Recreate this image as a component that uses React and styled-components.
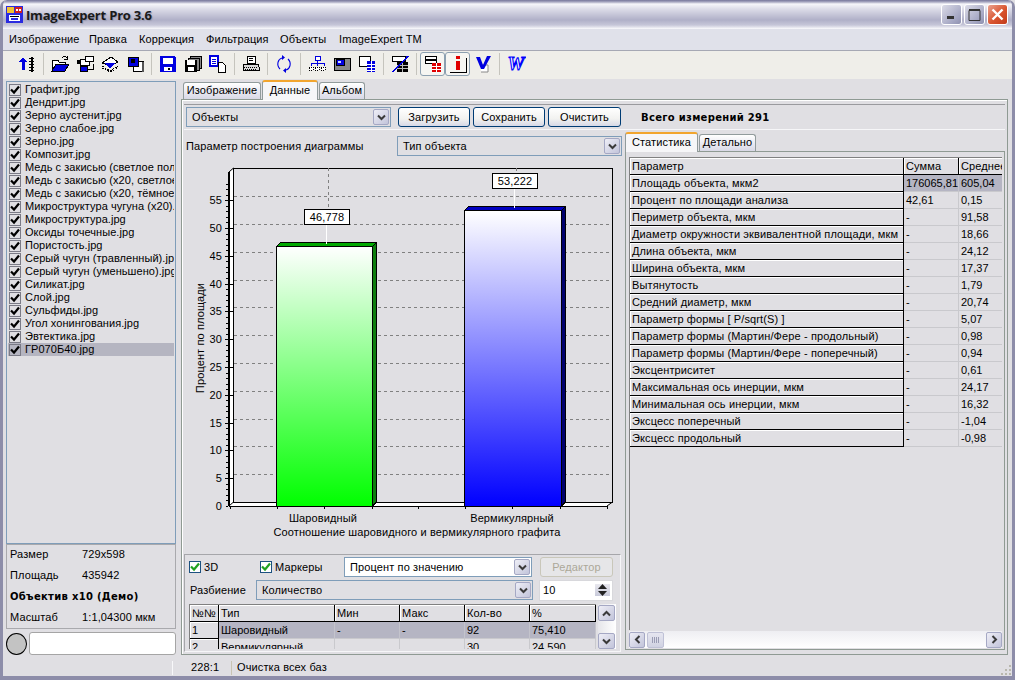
import styled, { createGlobalStyle } from 'styled-components';

const FONT = '"Liberation Sans", "DejaVu Sans", sans-serif';
const BOLD_FONT = '"DejaVu Sans", "Liberation Sans", sans-serif';

const GlobalStyle = createGlobalStyle`
  html, body {
    margin: 0;
    padding: 0;
    background: #e0dfe3;
  }
  * {
    box-sizing: border-box;
  }
`;

const Window = styled.div`
  width: 1015px;
  height: 680px;
  display: flex;
  flex-direction: column;
  overflow: hidden;
  position: relative;
  font: 11px/13px ${FONT};
  letter-spacing: 0.12px;
  color: #000;
  background: #e0dfe3;
  border-left: 3px solid #8d8da9;
  border-right: 3px solid #8d8da9;
  border-bottom: 4px solid #8d8da9;
  border-radius: 7px 7px 0 0;
`;

const TitleBar = styled.div`
  height: 29px;
  flex: none;
  margin: 0 -3px;
  padding: 0 7px 0 6px;
  display: flex;
  align-items: center;
  background: linear-gradient(#76769a 0, #a9a9c2 2px, #f6f6fa 4px, #dcdce8 9px, #b0b0c8 20px, #c6c6d8 25px, #fbfbfd 29px);
  border-radius: 7px 7px 0 0;
`;

const TitleText = styled.div`
  font: bold 13px "Open Sans", "DejaVu Sans", sans-serif;
  letter-spacing: -0.2px;
  margin-left: 3px;
  color: #1a1a1a;
  text-shadow: 1px 1px 1px #9a9ab0;
  flex: 1;
`;

const CaptionButton = styled.div`
  width: 21px;
  height: 21px;
  margin-left: 2px;
  border: 1px solid #fff;
  border-radius: 3px;
  display: flex;
  align-items: center;
  justify-content: center;
  background: ${(p) => (p.$close
    ? 'linear-gradient(135deg, #e9a28f, #d9542f 55%, #c23a1a)'
    : 'linear-gradient(135deg, #dcdce8, #a6a8c4 70%, #8f91b0)')};
`;

const MenuBar = styled.div`
  height: 22px;
  flex: none;
  display: flex;
  align-items: center;
  padding-left: 6px;
  background: #e0e1ea;
  border-bottom: 1px solid #a6a8b4;
`;

const MenuItem = styled.span`
  width: ${(p) => p.$w}px;
  flex: none;
`;

const ToolBar = styled.div`
  height: 28px;
  flex: none;
  display: flex;
  align-items: center;
  padding: 0 0 2px 11px;
  background: #efeee9;
`;

const ToolButton = styled.div`
  width: 25px;
  height: 24px;
  display: flex;
  align-items: center;
  justify-content: center;
  border-radius: 3px;
  ${(p) => p.$pressed && 'border: 1px solid #8ca0b0; background: #f6f6f2;'}
`;

const ToolSep = styled.div`
  width: 8px;
  height: 22px;
  position: relative;
  &::after {
    content: '';
    position: absolute;
    left: 4px;
    top: 0;
    bottom: 0;
    width: 1px;
    background: #c5c4bd;
  }
`;

const Workspace = styled.div`
  flex: 1;
  min-height: 0;
  display: flex;
  padding: 1px 4px 1px 3px;
  gap: 5px;
`;

const Sidebar = styled.div`
  width: 170px;
  flex: none;
  display: flex;
  flex-direction: column;
  padding-top: 1px;
`;

const FileList = styled.div`
  height: 463px;
  flex: none;
  padding: 1px;
  border: 1px solid #7f9db9;
  overflow: hidden;
`;

const FileRow = styled.div`
  height: 13px;
  display: flex;
  align-items: center;
  gap: 4px;
  padding-left: 1px;
  white-space: nowrap;
  overflow: hidden;
  letter-spacing: 0.05px;
  background: ${(p) => (p.$selected ? '#b5b5c1' : 'transparent')};
`;

const TickBox = styled.span`
  width: 12px;
  height: 12px;
  flex: none;
  display: inline-flex;
  align-items: center;
  justify-content: center;
  background: ${(p) => (p.$framed ? '#fff' : 'transparent')};
  border: 1px solid ${(p) => (p.$framed ? '#1c5180' : '#7a7a86')};
`;

const InfoPanel = styled.div`
  height: 85px;
  flex: none;
  padding: 0 3px;
  border: 1px solid #a9a9ad;
  display: flex;
  flex-direction: column;
  overflow: hidden;
`;

const InfoRow = styled.div`
  height: 21px;
  flex: none;
  padding-bottom: 2px;
  display: flex;
  align-items: center;
  ${(p) => p.$bold && `font: bold 10px ${BOLD_FONT}; letter-spacing: 0.3px;`}
`;

const InfoLabel = styled.span`
  width: 72px;
`;

const BottomRow = styled.div`
  display: flex;
  gap: 2px;
  margin-top: 3px;
  height: 23px;
`;

const Lamp = styled.div`
  width: 21px;
  height: 22px;
  margin-top: 1px;
  border-radius: 50%;
  border: 1px solid #000;
  background: #c3c3c3;
`;

const InputBox = styled.div`
  flex: 1;
  background: #fff;
  border: 1px solid #a5a5a5;
  border-radius: 3px;
`;

const TabStrip = styled.div`
  height: ${(p) => p.$h}px;
  flex: none;
  display: flex;
  align-items: flex-end;
  padding-left: ${(p) => p.$pad}px;
  gap: 1px;
`;

const Tab = styled.div`
  width: ${(p) => p.$w}px;
  height: ${(p) => (p.$active ? 20 : 17)}px;
  padding-bottom: ${(p) => (p.$active ? 2 : 1)}px;
  display: flex;
  align-items: center;
  justify-content: center;
  border: 1px solid #919b9c;
  border-bottom: none;
  border-radius: 3px 3px 0 0;
  position: relative;
  z-index: ${(p) => (p.$active ? 2 : 0)};
  margin-bottom: ${(p) => (p.$active ? -1 : 0)}px;
  background: ${(p) => (p.$active ? '#f6f6f8' : 'linear-gradient(#fff, #d8d8e6)')};
  ${(p) => p.$active && 'border-top: 2px solid #f2a52e;'}
`;

const MainColumn = styled.div`
  flex: 1;
  min-width: 0;
  display: flex;
  flex-direction: column;
`;

const Page = styled.div`
  flex: 1;
  min-height: 0;
  border: 1px solid #8f9a93;
  box-shadow: inset 1px 1px 0 #fff;
  padding: 4px 2px 4px 2px;
  display: flex;
  flex-direction: column;
`;

const ActionBar = styled.div`
  height: 26px;
  flex: none;
  display: flex;
  align-items: center;
  padding-left: 2px;
  border-top: 1px solid #9a9a9e;
  border-bottom: 1px solid #f6f6f8;
`;

const ComboBox = styled.div`
  width: ${(p) => p.$w}px;
  height: ${(p) => p.$h || 20}px;
  flex: none;
  display: flex;
  align-items: center;
  padding: 0 1px 0 5px;
  border: 1px solid #7f9db9;
  background: ${(p) => (p.$white ? '#fff' : 'transparent')};
`;

const ComboText = styled.span`
  flex: 1;
`;

const ArrowButton = styled.div`
  width: ${(p) => p.$w || 16}px;
  height: ${(p) => p.$h || 16}px;
  flex: none;
  display: flex;
  align-items: center;
  justify-content: center;
  border: 1px solid #a5a8c4;
  border-radius: 2px;
  background: linear-gradient(135deg, #eeeef6, #c2c4da);
`;

const PushButton = styled.div`
  width: ${(p) => p.$w}px;
  height: 20px;
  flex: none;
  margin-left: ${(p) => p.$ml || 3}px;
  display: flex;
  align-items: center;
  justify-content: center;
  border-radius: 3px;
  border: 1px solid ${(p) => (p.$disabled ? '#c9c7ba' : '#003c74')};
  color: ${(p) => (p.$disabled ? '#aca899' : '#000')};
  background: ${(p) => (p.$disabled ? '#e6e6e8' : 'linear-gradient(#fff, #f2f2f0 60%, #d6d8e6)')};
`;

const TotalText = styled.div`
  margin-left: 20px;
  font: bold 10px ${BOLD_FONT};
  letter-spacing: 0.3px;
`;

const Split = styled.div`
  flex: 1;
  min-height: 0;
  display: flex;
  gap: 3px;
`;

const ChartPane = styled.div`
  width: 438px;
  flex: none;
  display: flex;
  flex-direction: column;
`;

const ParamRow = styled.div`
  height: 20px;
  margin-top: 6px;
  flex: none;
  display: flex;
  align-items: center;
  padding-left: 2px;
`;

const ParamLabel = styled.span`
  width: 211px;
`;

const ChartBox = styled.svg`
  display: block;
  width: 438px;
  height: 385px;
  margin-top: 4px;
  flex: none;
  font-family: ${FONT};
  font-size: 11px;
`;

const ControlsPanel = styled.div`
  margin-top: 9px;
  height: 98px;
  flex: none;
  width: 437px;
  border: 1px solid #a6a6aa;
  border-right-color: #f6f6f8;
  border-bottom-color: #f6f6f8;
  padding: 1px 0 0 4px;
  display: flex;
  flex-direction: column;
`;

const ControlRow = styled.div`
  height: ${(p) => p.$h}px;
  flex: none;
  display: flex;
  align-items: center;
`;

const CheckLabel = styled.label`
  width: ${(p) => p.$w}px;
  flex: none;
  display: flex;
  align-items: center;
  gap: 3px;
`;

const RowLabel = styled.span`
  width: 67px;
  flex: none;
  padding-left: 1px;
`;

const Spinner = styled.div`
  width: 74px;
  height: 21px;
  margin-left: 6px;
  flex: none;
  display: flex;
  align-items: center;
  justify-content: space-between;
  padding: 0 2px 0 3px;
  background: #fff;
  border: 1px solid #d8d8dc;
`;

const SpinStack = styled.div`
  width: 15px;
  display: flex;
  flex-direction: column;
  align-items: center;
  gap: 2px;
  background: linear-gradient(#e8e8ee, #c8cada);
`;

const GridRow = styled.div`
  display: flex;
  gap: 2px;
  margin-top: 2px;
  height: 45px;
`;

const MiniGrid = styled.div`
  width: 407px;
  overflow: hidden;
  border-top: 1px solid #808080;
  border-left: 1px solid #808080;
  display: grid;
  grid-template-columns: 29px 116px 65px 65px 65px 66px;
  grid-auto-rows: 17px;
`;

const Fixed = styled.div`
  padding-left: 2px;
  display: flex;
  align-items: center;
  white-space: nowrap;
  overflow: hidden;
  background: #e0dfe3;
  border-right: 1px solid #000;
  border-bottom: 1px solid #000;
  box-shadow: inset 1px 1px 0 #fff;
`;

const Cell = styled.div`
  padding-left: 2px;
  display: flex;
  align-items: center;
  white-space: nowrap;
  overflow: hidden;
  letter-spacing: 0;
  border-right: 1px solid ${(p) => (p.$selected ? '#c4c4cc' : '#c9c9cd')};
  border-bottom: 1px solid #c9c9cd;
  background: ${(p) => (p.$selected ? '#b5b5c3' : 'transparent')};
`;

const VScroll = styled.div`
  width: 18px;
  display: flex;
  flex-direction: column;
  justify-content: space-between;
  padding-top: 1px;
  background: linear-gradient(90deg, #e6e6ea, #fff);
`;

const StatsPane = styled.div`
  flex: 1;
  min-width: 0;
  display: flex;
  flex-direction: column;
`;

const StatsBody = styled.div`
  flex: 1;
  min-height: 0;
  border: 1px solid #8f9a93;
  padding: 5px 2px 1px 3px;
  display: flex;
  flex-direction: column;
`;

const StatsGrid = styled.div`
  flex: 1;
  min-height: 0;
  align-content: start;
  overflow: hidden;
  border-top: 1px solid #808080;
  border-left: 1px solid #808080;
  display: grid;
  grid-template-columns: 274px 55px 60px;
  grid-auto-rows: 17px;
`;

const HScroll = styled.div`
  height: 17px;
  flex: none;
  margin-top: 1px;
  display: flex;
  align-items: center;
  background: linear-gradient(#eeeef2, #fff);
`;

const HThumb = styled.div`
  width: 17px;
  height: 16px;
  margin-left: 2px;
  display: flex;
  align-items: center;
  justify-content: center;
  gap: 1px;
  border: 1px solid #bfc1d6;
  border-radius: 2px;
  background: linear-gradient(#e6e6f0, #d0d2e2);
`;

const GripLine = styled.i`
  width: 1px;
  height: 6px;
  background: #9a9cb4;
`;

const HSpacer = styled.div`
  flex: 1;
`;

const StatusBar = styled.div`
  height: 20px;
  flex: none;
  padding-top: 3px;
  display: flex;
  align-items: center;
  position: relative;
`;

const StatusCell = styled.div`
  width: ${(p) => p.$w}px;
  height: 14px;
  flex: none;
  display: flex;
  align-items: center;
  padding-left: ${(p) => p.$pad || 0}px;
  border-right: 1px solid ${(p) => p.$line || 'transparent'};
`;

const Grip = styled.svg`
  position: absolute;
  right: 0;
  bottom: 0;
`;

const Chevron = ({ dir = 'down', size = 9 }) => {
  const rot = { down: 0, up: 180, left: 90, right: -90 }[dir];
  return (
    <svg width={size} height={size} viewBox="0 0 9 9" style={{ transform: `rotate(${rot}deg)` }}>
      <path d="M1 2.5 L4.5 6 L8 2.5" fill="none" stroke="#3a3a3a" strokeWidth="2" />
    </svg>
  );
};

const Tick = ({ green }) => (
  <svg width="10" height="10" viewBox="0 0 10 10">
    <path d="M1 4.5 L4 7.5 L9 1.5" fill="none" stroke={green ? '#21a121' : '#000'} strokeWidth="2.2" />
  </svg>
);

const Ico = ({ children, w = 18, h = 18 }) => (
  <svg width={w} height={h} viewBox="0 0 18 18" shapeRendering="crispEdges">{children}</svg>
);

const B = '#0000e0';

const icons = {
  sort: (
    <Ico>
      <path d="M5 15V6" fill="none" stroke={B} strokeWidth="3" />
      <path d="M1 7l4-5 4 5z" fill={B} />
      <path d="M11 3h5M11 6h5M11 9h5M11 12h5M11 15h5" stroke="#000" fill="none" />
      <path d="M13 2h2v15h-2z" fill="#000" />
    </Ico>
  ),
  open: (
    <Ico>
      <path d="M1 5h6l1 2h6v2H5L1 16z" fill="#fff" stroke="#000" />
      <path d="M5 9h13l-4 7H1z" fill={B} stroke="#000" />
      <path d="M11 3c2-2 4-2 5 0M16 1v3h-3" fill="none" stroke="#000" />
    </Ico>
  ),
  camera: (
    <Ico>
      <rect x="1" y="5" width="3" height="4" fill="#000" />
      <rect x="4" y="4" width="9" height="6" fill="#fff" stroke="#000" />
      <rect x="9" y="1" width="8" height="5" fill="#fff" stroke="#000" />
      <rect x="4" y="11" width="7" height="5" fill={B} stroke="#000" />
      <path d="M11 14h6V9" fill="none" stroke="#000" />
    </Ico>
  ),
  layers: (
    <Ico>
      <path d="M1 8L10 2l7 5-8 4z" fill="#fff" stroke="#000" />
      <path d="M4 8h10l-5 6z" fill={B} />
      <path d="M1 11l8 5 8-5M1 13l8 4 8-4" fill="none" stroke="#000" strokeDasharray="2 1" />
    </Ico>
  ),
  windows: (
    <Ico>
      <rect x="7" y="6" width="10" height="10" fill="#fff" stroke="#000" />
      <rect x="16" y="7" width="2" height="10" fill="#555" />
      <rect x="2" y="2" width="10" height="9" fill={B} stroke="#000" />
      <rect x="5" y="4" width="4" height="4" fill="#000" />
    </Ico>
  ),
  save: (
    <Ico>
      <path d="M1 1h14l2 2v14H1z" fill={B} />
      <rect x="4" y="3" width="10" height="6" fill="#fff" />
      <rect x="5" y="12" width="8" height="4" fill="#fff" />
      <rect x="9" y="13" width="2" height="2" fill="#000" />
    </Ico>
  ),
  saveAll: (
    <Ico>
      <rect x="6" y="1" width="11" height="12" fill="#888" stroke="#000" />
      <rect x="4" y="3" width="11" height="12" fill="#888" stroke="#000" />
      <rect x="1" y="5" width="12" height="12" fill="#000" />
      <rect x="3" y="5" width="8" height="5" fill="#fff" />
      <rect x="4" y="12" width="6" height="4" fill="#fff" />
    </Ico>
  ),
  docs: (
    <Ico>
      <rect x="1" y="1" width="8" height="10" fill="#fff" stroke={B} strokeWidth="1.5" />
      <path d="M3 4h4M3 6h4M3 8h4" stroke={B} />
      <path d="M10 7h3l3 3v7H9V7z" fill="#fff" stroke="#000" />
    </Ico>
  ),
  print: (
    <Ico>
      <rect x="5" y="1" width="8" height="7" fill="#fff" stroke="#000" />
      <path d="M7 3h4M7 5h4" stroke="#000" />
      <path d="M2 9h14l1 3v3H1v-3z" fill="#d8d8d8" stroke="#000" />
      <path d="M2 12h14M3 14h12" stroke="#000" strokeDasharray="1 1" />
    </Ico>
  ),
  cycle: (
    <svg width="18" height="20" viewBox="0 0 18 20">
      <path d="M5 15C1 11 3 5 7 4M13 5c4 4 2 10-2 11" fill="none" stroke={B} strokeWidth="1.1" />
      <path d="M7 1v5l3-2.5zM11 14v5l-3-2.5z" fill={B} />
    </svg>
  ),
  tree: (
    <Ico>
      <rect x="7" y="1" width="5" height="4" fill="#fff" stroke={B} />
      <path d="M9 5v3M3 8h13M3 8v3M9 8v3M16 8v3" stroke={B} fill="none" />
      <path d="M1 12h4v3H1zM7 12h4v3H7zM13 12h4v3h-4z" fill="#fff" stroke="#000" strokeDasharray="1 1" />
    </Ico>
  ),
  monitor: (
    <Ico>
      <rect x="1" y="3" width="16" height="12" fill="#888" stroke="#000" />
      <rect x="3" y="4" width="8" height="6" fill={B} stroke="#000" />
      <rect x="5" y="6" width="3" height="2" fill="#cfd6ff" />
    </Ico>
  ),
  tableWin: (
    <Ico>
      <rect x="1" y="1" width="11" height="10" fill="#fff" stroke="#000" />
      <rect x="9" y="6" width="8" height="11" fill={B} />
      <path d="M9 9h8M9 12h8M9 15h8M13 6v11" stroke="#fff" />
    </Ico>
  ),
  tableCut: (
    <Ico>
      <rect x="1" y="1" width="13" height="5" fill="#fff" stroke="#000" />
      <rect x="6" y="7" width="11" height="10" fill="#000" />
      <path d="M6 10h11M6 13h11M11 7v10" stroke="#bbb" />
      <path d="M17 1L2 17" stroke={B} strokeWidth="1.5" fill="none" />
    </Ico>
  ),
  redTable: (
    <Ico>
      <rect x="1" y="1" width="11" height="3" fill="#fff" stroke="#000" />
      <rect x="1" y="5" width="11" height="3" fill="#fff" stroke="#000" />
      <rect x="8" y="8" width="9" height="9" fill="#e00000" />
      <path d="M8 11h9M8 14h9M12 8v9" stroke="#fff" />
    </Ico>
  ),
  info: (
    <Ico>
      <rect x="7" y="1" width="4" height="3" fill="#e00000" />
      <rect x="7" y="6" width="4" height="9" fill="#e00000" />
      <path d="M1 17h16V3" fill="none" stroke="#000" />
    </Ico>
  ),
  check: (
    <svg width="18" height="18" viewBox="0 0 18 18">
      <path d="M7 10h7v7H7" fill="#fff" stroke="#888" />
      <path d="M2 2h4l3 8 4-9h4l-7 13h-3z" fill={B} />
    </svg>
  ),
  word: (
    <svg width="20" height="18" viewBox="0 0 20 18">
      <text
        x="10"
        y="15"
        textAnchor="middle"
        fontFamily='"Liberation Serif", serif'
        fontWeight="bold"
        fontStyle="italic"
        fontSize="19"
        fill="#fff"
        stroke="#0000ff"
        strokeWidth="1.1"
      >
        W
      </text>
    </svg>
  ),
};

const toolbar = [
  'sort', '|', 'open', 'camera', 'layers', 'windows', '|', 'save', 'saveAll', 'docs', '|', 'print', '|',
  'cycle', '|', 'tree', 'monitor', 'tableWin', '|', 'tableCut', '|', 'redTable', 'info', 'check', '|', 'word',
];

const menu = [
  ['Изображение', 80], ['Правка', 50], ['Коррекция', 67], ['Фильтрация', 74], ['Объекты', 59], ['ImageExpert TM', 90],
];

const files = [
  'Графит.jpg', 'Дендрит.jpg', 'Зерно аустенит.jpg', 'Зерно слабое.jpg', 'Зерно.jpg', 'Композит.jpg',
  'Медь с закисью (светлое пол', 'Медь с закисью (х20, светлое', 'Медь с закисью (х20, тёмное',
  'Микроструктура чугуна (х20).j', 'Микроструктура.jpg', 'Оксиды точечные.jpg', 'Пористость.jpg',
  'Серый чугун (травленный).jpg', 'Серый чугун (уменьшено).jpg', 'Силикат.jpg', 'Слой.jpg', 'Сульфиды.jpg',
  'Угол хонингования.jpg', 'Эвтектика.jpg', 'ГР070Б40.jpg',
];

const stats = [
  ['Площадь объекта, мкм2', '176065,81', '605,04'],
  ['Процент по площади анализа', '42,61', '0,15'],
  ['Периметр объекта, мкм', '-', '91,58'],
  ['Диаметр окружности эквивалентной площади, мкм', '-', '18,66'],
  ['Длина объекта, мкм', '-', '24,12'],
  ['Ширина объекта, мкм', '-', '17,37'],
  ['Вытянутость', '-', '1,79'],
  ['Средний диаметр, мкм', '-', '20,74'],
  ['Параметр формы [ P/sqrt(S) ]', '-', '5,07'],
  ['Параметр формы (Мартин/Фере - продольный)', '-', '0,98'],
  ['Параметр формы (Мартин/Фере - поперечный)', '-', '0,94'],
  ['Эксцентриситет', '-', '0,61'],
  ['Максимальная ось инерции, мкм', '-', '24,17'],
  ['Минимальная ось инерции, мкм', '-', '16,32'],
  ['Эксцесс поперечный', '-', '-1,04'],
  ['Эксцесс продольный', '-', '-0,98'],
];

const PX = 5.56;
const grid = [5, 10, 15, 20, 25, 30, 35, 40, 45, 50, 55];
const minor = Array.from({ length: 59 }, (_, i) => i);
const xTicks = [230, 277, 324, 372, 418, 465, 512, 560, 607];

const Bar = ({ x, w, top, side, cap, id }) => (
  <g>
    <path d={`M${x} ${top}l4 -4h${w}l-4 4z`} fill={cap} stroke="#000" />
    <path d={`M${x + w} ${top}l4 -4V502l-4 4z`} fill={side} stroke="#000" />
    <rect x={x} y={top} width={w} height={506 - top} fill={`url(#${id})`} stroke="#000" />
  </g>
);

const Marker = ({ x, y, text, lineX, barTop }) => (
  <g>
    <path d={`M${lineX + 2} 168V${y}`} stroke="#808080" strokeDasharray="3 3" />
    <path d={`M${lineX} ${y + 15}V${barTop}`} stroke="#fff" />
    <rect x={x} y={y} width="45" height="15" fill="#fff" stroke="#000" />
    <text x={x + 22.5} y={y + 11} textAnchor="middle">{text}</text>
  </g>
);

const Chart = () => (
  <ChartBox viewBox="184 160 438 385">
    <defs>
      <linearGradient id="gb" x1="0" y1="0" x2="0" y2="1">
        <stop offset="0" stopColor="#fff" />
        <stop offset="1" stopColor="#00ff00" />
      </linearGradient>
      <linearGradient id="bb" x1="0" y1="0" x2="0" y2="1">
        <stop offset="0" stopColor="#fff" />
        <stop offset="1" stopColor="#0000ff" />
      </linearGradient>
    </defs>
    <g shapeRendering="crispEdges">
      <path d="M229 172V506H607L612.5 502H233V168z" fill="#fff" />
      <rect x="233.5" y="168.5" width="379" height="333.5" fill="none" stroke="#000" />
      <path d="M233.5 502.5H612.5" stroke="#000" strokeDasharray="3 2" />
      {grid.map((v) => (
        <path key={v} d={`M234 ${Math.round(502 - v * PX) + 0.5}H612`} stroke="#808080" strokeDasharray="3 3" />
      ))}
      {grid.map((v) => (
        <path key={v} d={`M225 ${Math.round(506 - v * PX) + 0.5}H233`} stroke="#000" />
      ))}
      {minor.map((v) => (
        <path key={v} d={`M226 ${Math.round(506 - v * PX) + 0.5}H228`} stroke="#000" />
      ))}
      <path d="M228.5 172V506" stroke="#000" strokeWidth="2" />
      <path d="M229 506.5H607" stroke="#000" />
      {xTicks.map((x) => (
        <path key={x} d={`M${x + 0.5} 506V509`} stroke="#000" />
      ))}
    </g>
    <path d="M229 172L233.5 168M229 506L233.5 502M607 506L612.5 502" stroke="#000" fill="none" />
    <g shapeRendering="crispEdges">
      <Bar x={276.5} w={96} top={246.5} side="#0d7f0d" cap="#00a800" id="gb" />
      <Bar x={464.5} w={97} top={210.5} side="#00006e" cap="#0000c0" id="bb" />
      <Marker x={304.5} y={209.5} text="46,778" lineX={326.5} barTop={244} />
      <Marker x={492.5} y={173.5} text="53,222" lineX={514.5} barTop={208} />
    </g>
    {[0, ...grid].map((v) => (
      <text key={v} x="222" y={Math.round(506 - v * PX) + 4} textAnchor="end">{v}</text>
    ))}
    <text transform="translate(204 338) rotate(-90)" textAnchor="middle">Процент по площади</text>
    <text x="323" y="522" textAnchor="middle">Шаровидный</text>
    <text x="512" y="522" textAnchor="middle">Вермикулярный</text>
    <text x="417" y="536" textAnchor="middle">Соотношение шаровидного и вермикулярного графита</text>
  </ChartBox>
);

const AppLogo = () => (
  <svg width="17" height="17" viewBox="0 0 17 17" shapeRendering="crispEdges">
    <rect x="0" y="0" width="17" height="17" fill="#2a2ae0" />
    <rect x="1" y="1" width="7" height="6" fill="#f2c230" />
    <rect x="9" y="1" width="7" height="6" fill="#d02020" />
    <rect x="10" y="3" width="2" height="2" fill="#fff" />
    <rect x="13" y="3" width="2" height="2" fill="#fff" />
    <rect x="3" y="9" width="11" height="6" fill="#fff" />
    <rect x="4" y="10" width="9" height="1" fill="#000" />
    <rect x="5" y="12" width="7" height="2" fill="#2a2ae0" />
  </svg>
);

const Combo = ({ w, h, white, children, btnH }) => (
  <ComboBox $w={w} $h={h} $white={white}>
    <ComboText>{children}</ComboText>
    <ArrowButton $h={btnH}><Chevron /></ArrowButton>
  </ComboBox>
);

const App = () => (
  <Window>
    <GlobalStyle />
    <TitleBar>
      <AppLogo />
      <TitleText>ImageExpert Pro 3.6</TitleText>
      <CaptionButton>
        <svg width="9" height="9"><rect x="0" y="6" width="7" height="3" fill="#333" /></svg>
      </CaptionButton>
      <CaptionButton>
        <svg width="13" height="13"><path d="M1 2.5h11v10H1z" fill="none" stroke="#333" /><rect x="1" y="1" width="11" height="2" fill="#333" /></svg>
      </CaptionButton>
      <CaptionButton $close>
        <svg width="13" height="13"><path d="M1.5 1.5l10 10M11.5 1.5l-10 10" stroke="#fff" strokeWidth="2.4" /></svg>
      </CaptionButton>
    </TitleBar>
    <MenuBar>
      {menu.map(([label, w]) => <MenuItem key={label} $w={w}>{label}</MenuItem>)}
    </MenuBar>
    <ToolBar>
      {toolbar.map((name, i) => (name === '|'
        ? <ToolSep key={i} />
        : <ToolButton key={i} $pressed={name === 'redTable' || name === 'info'}>{icons[name]}</ToolButton>))}
    </ToolBar>
    <Workspace>
      <Sidebar>
        <FileList>
          {files.map((f) => (
            <FileRow key={f} $selected={f === 'ГР070Б40.jpg'}>
              <TickBox><Tick /></TickBox>
              {f}
            </FileRow>
          ))}
        </FileList>
        <InfoPanel>
          <InfoRow><InfoLabel>Размер</InfoLabel>729x598</InfoRow>
          <InfoRow><InfoLabel>Площадь</InfoLabel>435942</InfoRow>
          <InfoRow $bold>Объектив х10 (Демо)</InfoRow>
          <InfoRow><InfoLabel>Масштаб</InfoLabel>1:1,04300 мкм</InfoRow>
        </InfoPanel>
        <BottomRow>
          <Lamp />
          <InputBox />
        </BottomRow>
      </Sidebar>
      <MainColumn>
        <TabStrip $h={19} $pad={2}>
          <Tab $w={78}>Изображение</Tab>
          <Tab $active $w={56}>Данные</Tab>
          <Tab $w={46}>Альбом</Tab>
        </TabStrip>
        <Page>
          <ActionBar>
            <Combo w={205}>Объекты</Combo>
            <PushButton $w={72} $ml={7}>Загрузить</PushButton>
            <PushButton $w={72}>Сохранить</PushButton>
            <PushButton $w={73}>Очистить</PushButton>
            <TotalText>Всего измерений 291</TotalText>
          </ActionBar>
          <Split>
            <ChartPane>
              <ParamRow>
                <ParamLabel>Параметр построения диаграммы</ParamLabel>
                <Combo w={225}>Тип объекта</Combo>
              </ParamRow>
              <Chart />
              <ControlsPanel>
                <ControlRow $h={22}>
                  <CheckLabel $w={71}><TickBox $framed><Tick green /></TickBox>3D</CheckLabel>
                  <CheckLabel $w={84}><TickBox $framed><Tick green /></TickBox>Маркеры</CheckLabel>
                  <Combo w={188} white>Процент по значению</Combo>
                  <PushButton $w={73} $ml={8} $disabled>Редактор</PushButton>
                </ControlRow>
                <ControlRow $h={24}>
                  <RowLabel>Разбиение</RowLabel>
                  <Combo w={277}>Количество</Combo>
                  <Spinner>
                    10
                    <SpinStack>
                      <svg width="9" height="5"><path d="M0 5L4.5 0L9 5z" fill="#222" /></svg>
                      <svg width="9" height="5"><path d="M0 0L4.5 5L9 0z" fill="#222" /></svg>
                    </SpinStack>
                  </Spinner>
                </ControlRow>
                <GridRow>
                  <MiniGrid>
                    {['№№', 'Тип', 'Мин', 'Макс', 'Кол-во', '%'].map((h) => <Fixed key={h}>{h}</Fixed>)}
                    <Fixed>1</Fixed>
                    <Cell $selected>Шаровидный</Cell>
                    <Cell $selected>-</Cell>
                    <Cell $selected>-</Cell>
                    <Cell $selected>92</Cell>
                    <Cell $selected>75,410</Cell>
                    <Fixed>2</Fixed>
                    <Cell>Вермикулярный</Cell>
                    <Cell />
                    <Cell />
                    <Cell>30</Cell>
                    <Cell>24,590</Cell>
                  </MiniGrid>
                  <VScroll>
                    <ArrowButton $w={17} $h={16}><Chevron dir="up" /></ArrowButton>
                    <ArrowButton $w={17} $h={16}><Chevron /></ArrowButton>
                  </VScroll>
                </GridRow>
              </ControlsPanel>
            </ChartPane>
            <StatsPane>
              <TabStrip $h={21} $pad={0}>
                <Tab $active $w={73}>Статистика</Tab>
                <Tab $w={57}>Детально</Tab>
              </TabStrip>
              <StatsBody>
                <StatsGrid>
                  <Fixed>Параметр</Fixed>
                  <Fixed>Сумма</Fixed>
                  <Fixed>Среднее</Fixed>
                  {stats.map(([name, sum, avg], i) => [
                    <Fixed key={name}>{name}</Fixed>,
                    <Cell key={`${name}-s`} $selected={i === 0}>{sum}</Cell>,
                    <Cell key={`${name}-a`} $selected={i === 0}>{avg}</Cell>,
                  ])}
                </StatsGrid>
                <HScroll>
                  <ArrowButton $w={16} $h={16}><Chevron dir="left" /></ArrowButton>
                  <HThumb><GripLine /><GripLine /><GripLine /><GripLine /></HThumb>
                  <HSpacer />
                  <ArrowButton $w={16} $h={16}><Chevron dir="right" /></ArrowButton>
                </HScroll>
              </StatsBody>
            </StatsPane>
          </Split>
        </Page>
      </MainColumn>
    </Workspace>
    <StatusBar>
      <StatusCell $w={170} $line="#f8f8fa" />
      <StatusCell $w={59} $pad={18} $line="#c8c4b4">228:1</StatusCell>
      <StatusCell $w={200} $pad={5}>Очистка всех баз</StatusCell>
      <Grip width="12" height="12" viewBox="0 0 12 12">
        <path d="M9 1h2v2H9zM5 5h2v2H5zM9 5h2v2H9zM1 9h2v2H1zM5 9h2v2H5zM9 9h2v2H9z" fill="#b8b7ad" />
      </Grip>
    </StatusBar>
  </Window>
);

export default App;
